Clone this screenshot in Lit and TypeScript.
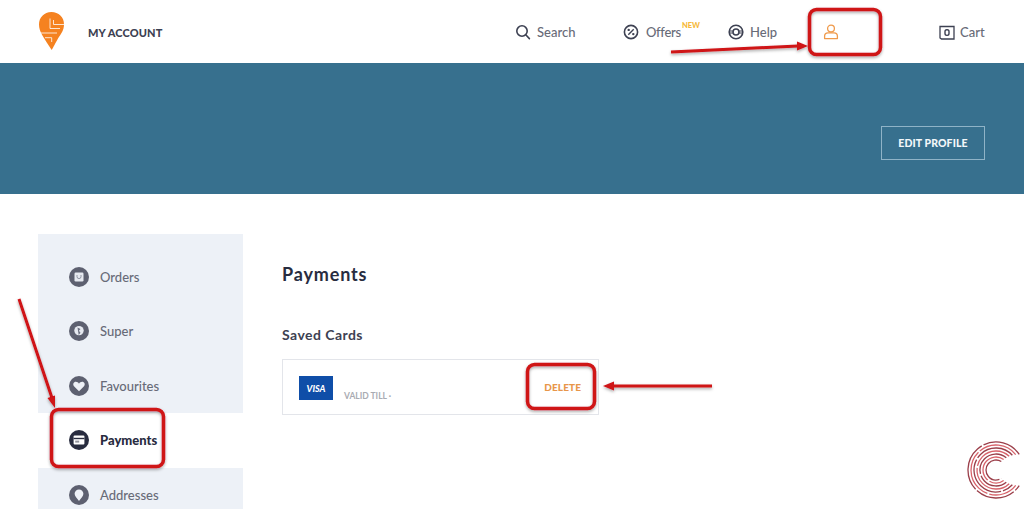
import { LitElement, html, css, svg } from "lit";
import { customElement } from "lit/decorators.js";

const navIcons: Record<string, unknown> = {
  search: svg`<circle cx="8" cy="8" r="5.2" fill="none" stroke="#3d4152" stroke-width="1.6"/><path d="M12 12l3.4 3.6" stroke="#3d4152" stroke-width="1.6" stroke-linecap="round"/>`,
  offers: svg`<circle cx="9" cy="9" r="6.6" fill="none" stroke="#3d4152" stroke-width="1.6"/><path d="M6.3 11.700l5.400-5.400" stroke="#3d4152" stroke-width="1.4"/><circle cx="6.700" cy="6.900" r="1.2" fill="#3d4152"/><circle cx="11.300" cy="11.100" r="1.2" fill="#3d4152"/>`,
  help: svg`<circle cx="9" cy="9" r="6.800" fill="none" stroke="#3d4152" stroke-width="1.6"/><circle cx="9" cy="9" r="3" fill="none" stroke="#3d4152" stroke-width="1.6"/><path d="M2.400 8h3.400M12.200 8h3.400M2.400 10h3.400M12.200 10h3.400" stroke="#3d4152" stroke-width="1"/>`,
  user: svg`<circle cx="9" cy="5.600" r="3.400" fill="none" stroke="#ef9a4b" stroke-width="1.3"/><path d="M2.600 15.600v-2.400c0-2 1.600-3.400 3.400-3.400h6c1.800 0 3.400 1.400 3.400 3.400v2.400z" fill="none" stroke="#ef9a4b" stroke-width="1.3" stroke-linejoin="round"/>`,
  cart: svg`<path d="M2 3.500h14v12.500H3.500L2 15z" fill="none" stroke="#3d4152" stroke-width="1.3"/><rect x="7" y="6.800" width="4" height="5.600" rx="1.800" fill="none" stroke="#3d4152" stroke-width="1.4"/>`,
};

const sideIcons: Record<string, unknown> = {
  Orders: svg`<rect x="5.500" y="5.500" width="9" height="9" rx="1.200" fill="#e6e9f0"/><path d="M8 8v1.600a2 2 0 0 0 4 0V8" fill="none" stroke="#7b8090" stroke-width=".8"/>`,
  Super: svg`<circle cx="10" cy="9.600" r="4.700" fill="#e6e9f0"/><path d="M8.500 6.500l3 1.400-1.600 1.800 1.600 2-1.800 2.400z" fill="#6c7080"/>`,
  Favourites: svg`<path d="M10 15.200l-5-5c-1.500-1.600-.5-4.400 1.900-4.400 1.300 0 2.400.7 3.100 1.900.7-1.200 1.800-1.900 3.100-1.900 2.400 0 3.400 2.800 1.900 4.400z" fill="#eef1f7"/>`,
  Payments: svg`<rect x="4.600" y="5.600" width="10.800" height="9" rx="1" fill="#fff"/><rect x="4.600" y="7.800" width="10.800" height="1.400" fill="#282c3f"/><rect x="6.200" y="10.600" width="4" height="2" fill="#282c3f" opacity=".5"/>`,
  Addresses: svg`<path d="M10 16c-2-2.600-4.400-4.800-4.400-7.200a4.400 4.400 0 0 1 8.800 0C14.400 11.200 12 13.400 10 16z" fill="#eef1f7"/>`,
};

const sideItems = ["Orders", "Super", "Favourites", "Payments", "Addresses"];

@customElement("app-root")
export class AppRoot extends LitElement {
  static styles = css`
    :host {
      display: block;
      position: relative;
      width: 1024px;
      height: 509px;
      overflow: hidden;
      background: #fff;
      font-family: Lato, "Open Sans", sans-serif;
      color: #3d4152;
    }
    .header {
      height: 63px;
      display: flex;
      align-items: center;
      padding: 0 39px;
      box-sizing: border-box;
    }
    .logo { width: 25px; height: 38px; margin-top: -2px; }
    .title {
      margin-left: 24px;
      font-size: 11px;
      font-weight: 900;
      letter-spacing: 0.1px;
      color: #3d4152;
      margin-top: 1px;
    }
    .nav {
      margin-left: auto;
      display: flex;
      align-items: center;
      height: 100%;
    }
    .nav-item {
      display: flex;
      align-items: center;
      font-size: 13px;
      font-weight: 500;
      color: #686b78;
      gap: 5px;
      position: relative;
      white-space: nowrap;
    }
    .nav-item svg { width: 18px; height: 18px; flex: none; }
    .search { width: 62px; margin-right: 46px; }
    .offers { width: 58px; margin-right: 47px; gap: 6px; letter-spacing: -0.3px; }
    .help { width: 50px; margin-right: 45px; }
    .user { width: 18px; margin-right: 98px; }
    .cart { width: 47px; gap: 4px; }
    .new {
      position: absolute;
      left: 60px;
      top: -2px;
      font-size: 7.5px;
      font-weight: 900;
      letter-spacing: 0;
      color: #f6b93b;
    }
    .banner {
      height: 131px;
      background: #37708e;
      display: flex;
      justify-content: flex-end;
      align-items: flex-start;
      padding: 63px 39px 0 0;
      box-sizing: border-box;
    }
    .edit {
      width: 104px;
      height: 34px;
      box-sizing: border-box;
      border: 1px solid #8fb3c7;
      color: #f2f7fa;
      font-size: 10.5px;
      font-weight: 900;
      display: flex;
      align-items: center;
      justify-content: center;
      letter-spacing: 0.1px;
    }
    .main {
      display: flex;
      padding: 40px 0 0 38px;
    }
    .sidebar {
      width: 205px;
      background: #edf1f7;
      padding-top: 15.5px;
      flex: none;
    }
    .side-item {
      height: 54.5px;
      display: flex;
      align-items: center;
      padding-left: 31px;
      gap: 11px;
      font-size: 13px;
      font-weight: 500;
      color: #686b78;
    }
    .side-item.active {
      background: #fff;
      color: #282c3f;
      font-weight: 900;
    }
    .side-item svg { width: 20px; height: 20px; flex: none; }
    .content { margin-left: 39px; }
    h1 {
      margin: 0;
      padding-top: 29px;
      font-size: 18px;
      line-height: 22px;
      font-weight: 700;
      letter-spacing: 0.85px;
      color: #282c3f;
    }
    h2 {
      margin: 0;
      padding-top: 41px;
      font-size: 14px;
      line-height: 18px;
      font-weight: 700;
      letter-spacing: 0.45px;
      color: #3d4152;
    }
    .card {
      margin-top: 15px;
      width: 317px;
      height: 56px;
      box-sizing: border-box;
      border: 1px solid #e3e5ea;
      display: flex;
      position: relative;
      padding: 16px 0 0 16px;
    }
    .visa {
      width: 34px;
      height: 24px;
      background: #0f4ea8;
      color: #fff;
      font-size: 9px;
      font-weight: 900;
      font-style: italic;
      display: flex;
      align-items: center;
      justify-content: center;
    }
    .valid {
      margin: 14px 0 0 11px;
      font-size: 8.5px;
      font-weight: 700;
      color: #a9abb2;
      line-height: 12px;
    }
    .delete {
      margin-left: auto;
      margin-right: 17px;
      margin-top: 5px;
      font-size: 10px;
      font-weight: 900;
      color: #e8964a;
      letter-spacing: 0.1px;
    }
    .overlay {
      position: absolute;
      left: 0;
      top: 0;
      width: 1024px;
      height: 509px;
      pointer-events: none;
    }
  `;

  private box(x: number, y: number, w: number, h: number) {
    return svg`<rect x=${x} y=${y} width=${w} height=${h} rx="7" fill="none" stroke="#cf1219" stroke-width="3.500"/>`;
  }

  private arcs() {
    const cx = 996, cy = 470;
    const radii = [10, 13, 16, 19, 22, 25, 28];
    return radii.map((r, i) => {
      const a1 = (-(58 - i * 4)) * Math.PI / 180;
      const a2 = (58 - i * 4) * Math.PI / 180;
      const x1 = cx + r * Math.cos(a1), y1 = cy + r * Math.sin(a1);
      const x2 = cx + r * Math.cos(a2), y2 = cy + r * Math.sin(a2);
      return svg`<path d="M${x1} ${y1}A${r} ${r} 0 1 0 ${x2} ${y2}" fill="none" stroke=${i % 2 ? "#d8636b" : "#9b3f4a"} stroke-width="1.300" stroke-dasharray="40 2 50 2"/>`;
    });
  }

  render() {
    return html`
      <div class="header">
        <svg class="logo" viewBox="0 0 25 38">
          <path d="M12.500 0C5 0 0 5.600 0 12.400 0 20 5 25.600 12.700 38 14.200 35.600 17 30 19 26.400 22 22 25 18 25 12.400 25 5 19.500 0 12.500 0z" fill="#f58220"/>
          <path d="M11 6.500V16.500H21M14.500 8V12.500H25M0 21H18M6 25.700H12.700V30" fill="none" stroke="#fff" stroke-width=".8"/>
        </svg>
        <div class="title">MY ACCOUNT</div>
        <div class="nav">
          <div class="nav-item search"><svg viewBox="0 0 18 18">${navIcons.search}</svg>Search</div>
          <div class="nav-item offers"><svg viewBox="0 0 18 18">${navIcons.offers}</svg>Offers<span class="new">NEW</span></div>
          <div class="nav-item help"><svg viewBox="0 0 18 18">${navIcons.help}</svg>Help</div>
          <div class="nav-item user"><svg viewBox="0 0 18 18">${navIcons.user}</svg></div>
          <div class="nav-item cart"><svg viewBox="0 0 18 18">${navIcons.cart}</svg>Cart</div>
        </div>
      </div>
      <div class="banner"><div class="edit">EDIT PROFILE</div></div>
      <div class="main">
        <div class="sidebar">
          ${sideItems.map(
            (n) => html`<div class="side-item ${n === "Payments" ? "active" : ""}">
              <svg viewBox="0 0 20 20"><circle cx="10" cy="10" r="10" fill=${n === "Payments" ? "#282c3f" : "#5d6070"}/>${sideIcons[n]}</svg>
              ${n}
            </div>`
          )}
        </div>
        <div class="content">
          <h1>Payments</h1>
          <h2>Saved Cards</h2>
          <div class="card">
            <div class="visa">VISA</div>
            <div class="valid">VALID TILL ·</div>
            <div class="delete">DELETE</div>
          </div>
        </div>
      </div>
      <svg class="overlay" viewBox="0 0 1024 509">
        <defs>
          <filter id="s" x="-10%" y="-10%" width="120%" height="130%">
            <feDropShadow dx="0" dy="1.500" stdDeviation="1.500" flood-color="#000" flood-opacity=".35"/>
          </filter>
        </defs>
        <g filter="url(#s)">
          ${this.box(809.5, 9.5, 71, 45)}
          ${this.box(51.5, 409.5, 112, 57)}
          ${this.box(527.5, 364.5, 67, 44)}
          <path d="M671 52L798 46" stroke="#cf1219" stroke-width="3" fill="none"/>
          <path d="M808 46l-11-4.500v9z" fill="#cf1219"/>
          <path d="M19 299L52 398" stroke="#cf1219" stroke-width="3" fill="none"/>
          <path d="M55 408l-7.500-10 7.500-2.500z" fill="#cf1219"/>
          <path d="M712 386L612 386" stroke="#cf1219" stroke-width="3" fill="none"/>
          <path d="M603 386l11-4.500v9z" fill="#cf1219"/>
        </g>
        ${this.arcs()}
      </svg>
    `;
  }
}
